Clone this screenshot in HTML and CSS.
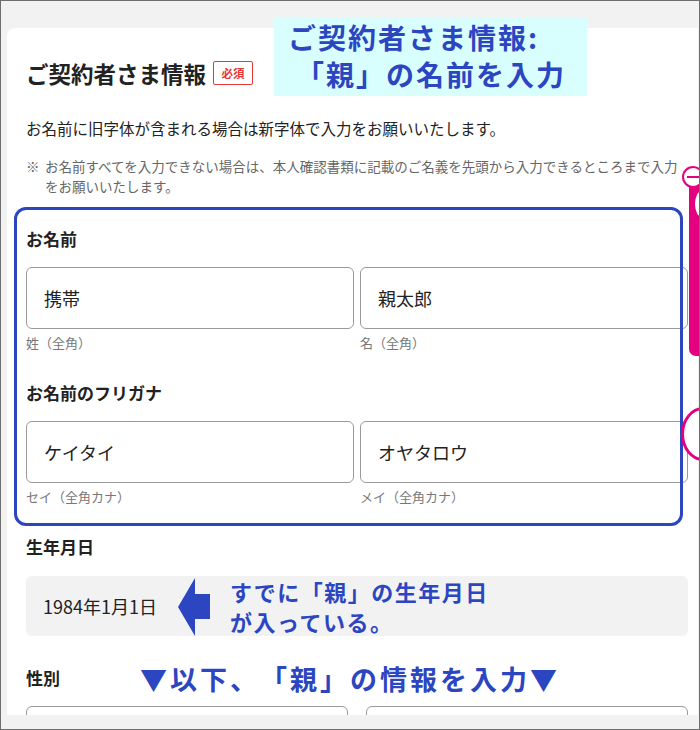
FILE: index.html
```html
<!DOCTYPE html>
<html lang="ja">
<head>
    <meta charset="UTF-8">
    <title>ご契約者さま情報</title>
    <link rel="stylesheet" href="styles.css">
</head>
<body>
    <div class="screen">
        <div class="card">
            <div class="title-row">
                <h2 class="title">ご契約者さま情報</h2>
                <span class="badge">必須</span>
            </div>
            <p class="desc">お名前に旧字体が含まれる場合は新字体で入力をお願いいたします。</p>
            <div class="note">
                <span class="mark">※</span>
                <span class="note-text">お名前すべてを入力できない場合は、本人確認書類に記載のご名義を先頭から入力できるところまで入力<br>をお願いいたします。</span>
            </div>

            <div class="field field-name">
                <div class="label">お名前</div>
                <div class="pair">
                    <div class="col">
                        <div class="input">携帯</div>
                        <div class="hint">姓（全角）</div>
                    </div>
                    <div class="col">
                        <div class="input">親太郎</div>
                        <div class="hint">名（全角）</div>
                    </div>
                </div>
            </div>

            <div class="field">
                <div class="label">お名前のフリガナ</div>
                <div class="pair">
                    <div class="col">
                        <div class="input">ケイタイ</div>
                        <div class="hint">セイ（全角カナ）</div>
                    </div>
                    <div class="col">
                        <div class="input">オヤタロウ</div>
                        <div class="hint">メイ（全角カナ）</div>
                    </div>
                </div>
            </div>

            <div class="field field-birth">
                <div class="label">生年月日</div>
                <div class="readonly">1984年1月1日</div>
            </div>

            <div class="field field-gender">
                <div class="label">性別</div>
                <div class="pair gender">
                    <div class="input"></div>
                    <div class="input"></div>
                </div>
            </div>
        </div>

        <!-- annotations drawn over the screenshot -->
        <div class="frame"></div>
        <div class="callout">ご契約者さま情報:<br><span class="callout-2">「親」の名前を入力</span></div>
        <svg class="arrow" width="34" height="58" viewBox="0 0 34 58">
            <polygon points="0,29 17,0 17,16 32,16 32,41 17,41 17,58" fill="#2c45c0"/>
        </svg>
        <div class="arrow-text">すでに「親」の生年月日<br>が入っている。</div>
        <div class="below-text">▼以下、「親」の情報を入力▼</div>

        <!-- side widget peeking in from the right -->
        <div class="side-bar"><span class="side-dot"></span></div>
        <div class="side-minus"></div>
        <div class="side-ring"></div>
    </div>
</body>
</html>
```

FILE: styles.css
```css
body {
    margin: 0;
    font-family: "Noto Sans CJK JP", "Noto Sans", sans-serif;
    color: #222;
    text-spacing-trim: space-all;
}

.screen {
    position: relative;
    width: 700px;
    height: 730px;
    box-sizing: border-box;
    border: 1px solid #6e6e6e;
    background-color: #f2f2f2;
    overflow: hidden;
}

.card {
    margin: 27px 1px 0 6px;
    height: 687px;
    padding: 31px 10px 0 19px;
    box-sizing: border-box;
    background-color: #fff;
    border-radius: 8px 0 0 0;
    overflow: hidden;
}

.title-row {
    display: flex;
    align-items: center;
    height: 28px;
}

.title {
    margin: 0;
    font-size: 22.5px;
    line-height: 28px;
    font-weight: 700;
}

.badge {
    margin-left: 7px;
    width: 38px;
    height: 22px;
    border: 1px solid #e53935;
    border-radius: 2px;
    color: #e53935;
    font-size: 11.5px;
    font-weight: 700;
    line-height: 22px;
    text-align: center;
}

.desc {
    margin: 29px 0 0;
    font-size: 15.5px;
    line-height: 24px;
}

.note {
    display: flex;
    margin-top: 16px;
    font-size: 13.5px;
    line-height: 20px;
    color: #666;
    white-space: nowrap;
}

.mark {
    width: 19px;
    flex: none;
}

.field {
    margin-top: 29px;
}

.field-name {
    margin-top: 31px;
}

.label {
    font-size: 17px;
    font-weight: 700;
    line-height: 24px;
    margin-bottom: 16px;
}

.pair {
    display: flex;
    gap: 6px;
}

.col {
    flex: 1;
}

.input {
    height: 62px;
    box-sizing: border-box;
    border: 1px solid #9a9a9a;
    border-radius: 6px;
    padding-left: 17px;
    font-size: 18px;
    line-height: 60px;
}

.hint {
    margin-top: 5px;
    font-size: 13px;
    line-height: 18px;
    color: #777;
}

.field-birth {
    margin-top: 29px;
}

.readonly {
    margin-top: 17px;
    height: 60px;
    border-radius: 6px;
    background-color: #f2f2f2;
    padding-left: 17px;
    font-size: 18px;
    line-height: 60px;
}

.field-gender {
    margin-top: 30px;
}

.gender {
    gap: 18px;
}

.gender .input {
    width: 322px;
    flex: none;
}

/* annotations */
.frame {
    position: absolute;
    left: 13px;
    top: 206px;
    width: 669px;
    height: 319px;
    box-sizing: border-box;
    border: 3px solid #2c45c0;
    border-radius: 12px;
}

.callout {
    position: absolute;
    left: 273px;
    top: 17px;
    width: 313px;
    height: 78px;
    box-sizing: border-box;
    padding: 1px 0 0 14px;
    background-color: #d9fefe;
    color: #2c45c0;
    font-size: 28px;
    font-weight: 700;
    line-height: 37px;
    letter-spacing: 2px;
    white-space: nowrap;
}

.callout-2 {
    margin-left: 8px;
}

.arrow {
    position: absolute;
    left: 177px;
    top: 577px;
}

.arrow-text {
    position: absolute;
    left: 229px;
    top: 575px;
    color: #2c45c0;
    font-size: 22px;
    font-weight: 700;
    line-height: 30px;
    letter-spacing: 1.5px;
    white-space: nowrap;
}

.below-text {
    position: absolute;
    left: 139px;
    top: 660px;
    color: #2c45c0;
    font-size: 27px;
    font-weight: 700;
    line-height: 36px;
    letter-spacing: 3px;
    white-space: nowrap;
}

.side-bar {
    position: absolute;
    left: 688px;
    top: 182px;
    width: 20px;
    height: 173px;
    background-color: #e4007f;
    border-radius: 0 0 0 7px;
}

.side-dot {
    position: absolute;
    left: 6px;
    top: 8px;
    width: 14px;
    height: 26px;
    border-radius: 50%;
    background-color: #fff;
}

.side-minus {
    position: absolute;
    left: 681px;
    top: 165px;
    width: 22px;
    height: 22px;
    box-sizing: border-box;
    border: 2px solid #e4007f;
    border-radius: 50%;
    background-color: #fff;
}

.side-minus::after {
    content: "";
    position: absolute;
    left: 3px;
    top: 8px;
    width: 12px;
    height: 2px;
    background-color: #e4007f;
}

.side-ring {
    position: absolute;
    left: 680px;
    top: 406px;
    width: 44px;
    height: 54px;
    box-sizing: border-box;
    border: 3px solid #e4007f;
    border-radius: 50%;
    background-color: #fff;
}
```
